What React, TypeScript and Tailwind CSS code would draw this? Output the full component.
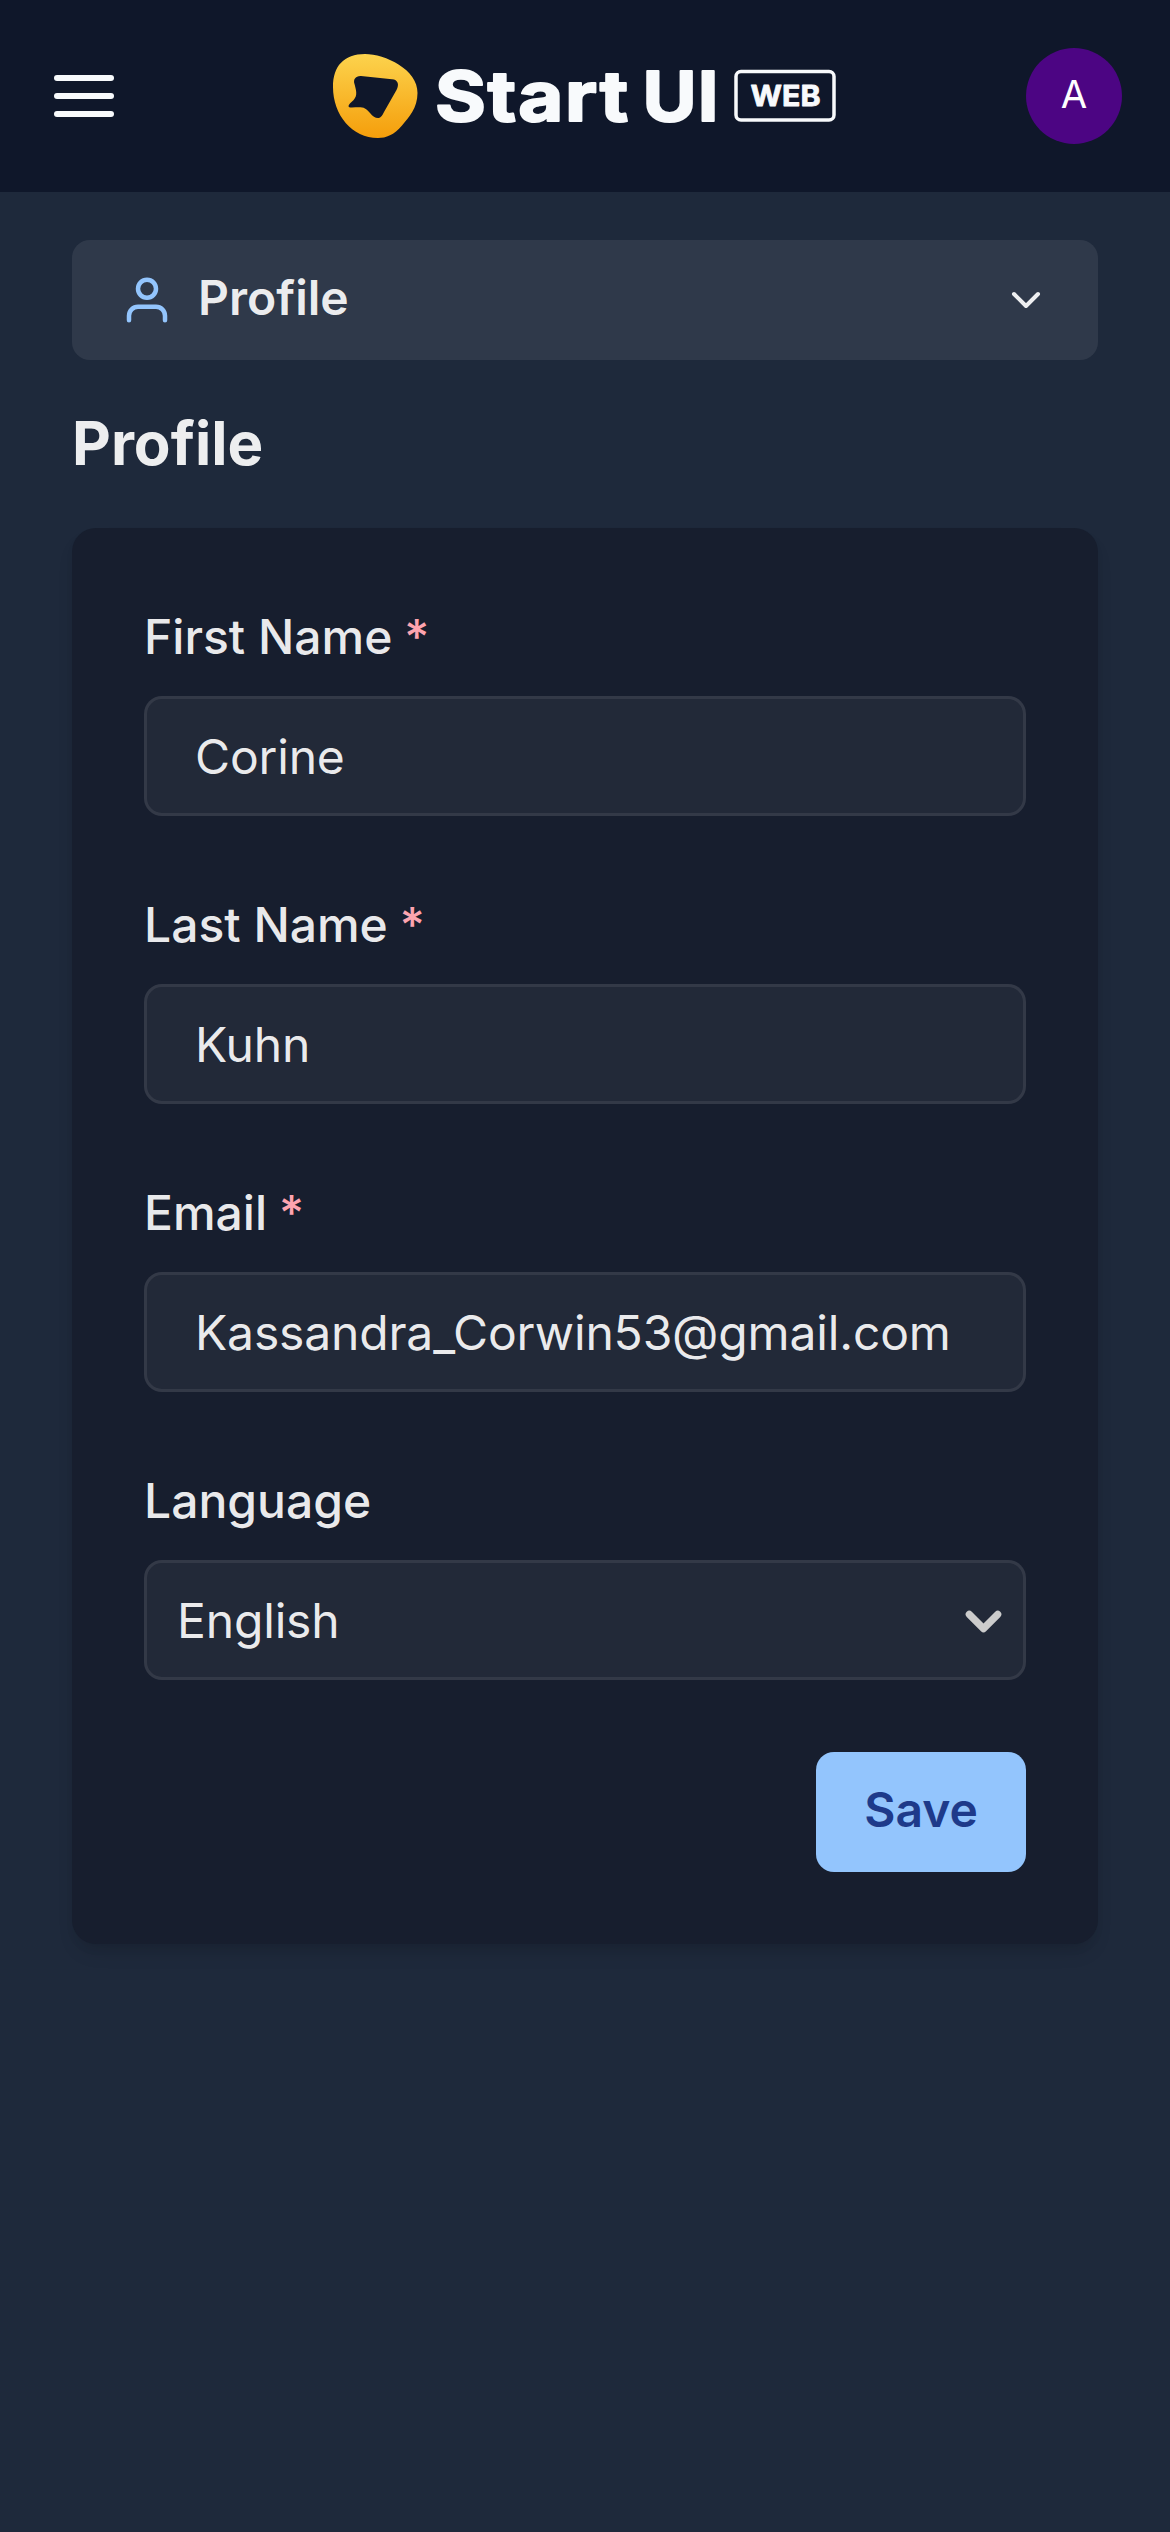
import React from "react";

function Logo() {
  return (
    <svg
      className="h-[96px] w-[510px]"
      viewBox="333 48 510 96"
      fill="none"
      role="img"
      aria-label="Start UI Web"
    >
      <defs>
        <linearGradient id="blob" x1="376" y1="54" x2="376" y2="138" gradientUnits="userSpaceOnUse">
          <stop stopColor="#fcd34d" />
          <stop offset="1" stopColor="#f59e0b" />
        </linearGradient>
      </defs>
      <path
        fill="url(#blob)"
        fillRule="evenodd"
        d="M365 54C385 54 418 69.500 417.500 93C417.500 108 409 117 402 125.500C394 135 386 138 378 138C352 138 333 115 333 87C333 66 344 54 365 54Z M361 76C355.500 75.700 353 79.500 354.500 84C357 93 357.500 97 351.500 102C347 106 348 107.700 352 107.500C363 106.800 365 107 370 113C373 117 376 118.500 379 118C381 117.500 382.500 115 384 112L396.500 90C399.500 84.500 398 79.600 392 79.200Z"
      />
      <g fill="#f8fafc" stroke="#f8fafc" strokeLinejoin="round" fontFamily="Inter, sans-serif">
        <text x="435" y="120.500" fontSize="69" fontWeight="700" strokeWidth="2" letterSpacing="1.500" textLength="195" lengthAdjust="spacingAndGlyphs">
          Start
        </text>
        <text x="642.500" y="120.500" fontSize="69" fontWeight="700" strokeWidth="2" letterSpacing="1" textLength="77" lengthAdjust="spacingAndGlyphs">
          UI
        </text>
        <text x="750.500" y="106.400" fontSize="28.500" fontWeight="700" strokeWidth="0.800" textLength="70" lengthAdjust="spacingAndGlyphs">
          WEB
        </text>
        <rect x="736" y="71.500" width="98" height="48.500" rx="5" strokeWidth="3.500" fill="none" />
      </g>
    </svg>
  );
}

function Chevron({ className, weight = 2 }: { className: string; weight?: number }) {
  return (
    <svg className={className} viewBox="0 0 24 24" fill="none" stroke="currentColor" strokeWidth={weight} strokeLinecap="round" strokeLinejoin="round">
      <path d="m6 9 6 6 6-6" />
    </svg>
  );
}

function Label({ text, required }: { text: string; required?: boolean }) {
  return (
    <div className="mb-6 h-[72px] text-[48px] leading-[73px] font-medium">
      {text}
      {required && <span className="ml-3 text-[#fda4af]">*</span>}
    </div>
  );
}

const fields = [
  { label: "First Name", value: "Corine" },
  { label: "Last Name", value: "Kuhn" },
  { label: "Email", value: "Kassandra_Corwin53@gmail.com" },
];

export default function App() {
  return (
    <div className="flex h-[2532px] w-[1170px] flex-col bg-[#1e293b] font-['Inter',sans-serif] text-white/92">
      <header className="flex h-48 items-center justify-between bg-[#0f172a] pr-12 pl-[54px]">
        <div className="flex w-[96px] flex-col gap-3">
          <span className="h-1.5 w-[60px] rounded-full bg-slate-50" />
          <span className="h-1.5 w-[60px] rounded-full bg-slate-50" />
          <span className="h-1.5 w-[60px] rounded-full bg-slate-50" />
        </div>
        <Logo />
        <div className="flex size-24 items-center justify-center rounded-full bg-[#4c0583] pb-0.5 text-[38.4px] text-white">A</div>
      </header>

      <main className="flex flex-col px-[72px] pt-12">
        <button className="flex h-[120px] items-center rounded-[18px] bg-white/8 px-12 text-left text-[48px] font-semibold">
          <svg className="mr-6 size-[54px] text-[#93c5fd]" viewBox="0 0 24 24" fill="none" stroke="currentColor" strokeWidth="2" strokeLinecap="round" strokeLinejoin="round">
            <path d="M20 21v-2a4 4 0 0 0-4-4H8a4 4 0 0 0-4 4v2" />
            <circle cx="12" cy="7" r="4" />
          </svg>
          <span className="grow pb-1">Profile</span>
          <Chevron className="size-12" />
        </button>

        <h1 className="mt-12 mb-12 h-[72px] text-[60px] leading-[70px] font-bold">Profile</h1>

        <section className="flex flex-col gap-[72px] rounded-3xl bg-[#171e2e] p-[72px] shadow-[0_12px_18px_-3px_rgba(0,0,0,0.1),0_6px_12px_-3px_rgba(0,0,0,0.06)]">
          {fields.map((f) => (
            <div key={f.label}>
              <Label text={f.label} required />
              <div className="flex h-[120px] items-center rounded-[18px] border-3 border-white/8 bg-white/5 px-12 pt-px text-[48px] tracking-[-0.16px]">
                {f.value}
              </div>
            </div>
          ))}
          <div>
            <Label text="Language" />
            <div className="flex h-[120px] items-center justify-between rounded-[18px] border-3 border-white/8 bg-white/5 pt-px pr-[11px] pl-[30px] text-[48px] tracking-[-0.16px]">
              English
              <Chevron className="mt-0.5 size-[57px] text-[#cccccc]" weight={3} />
            </div>
          </div>
          <button className="h-[120px] w-[210px] self-end rounded-[18px] bg-[#93c5fd] pb-1 text-[48px] font-semibold text-[#1e3a8a]">
            Save
          </button>
        </section>
      </main>
    </div>
  );
}
